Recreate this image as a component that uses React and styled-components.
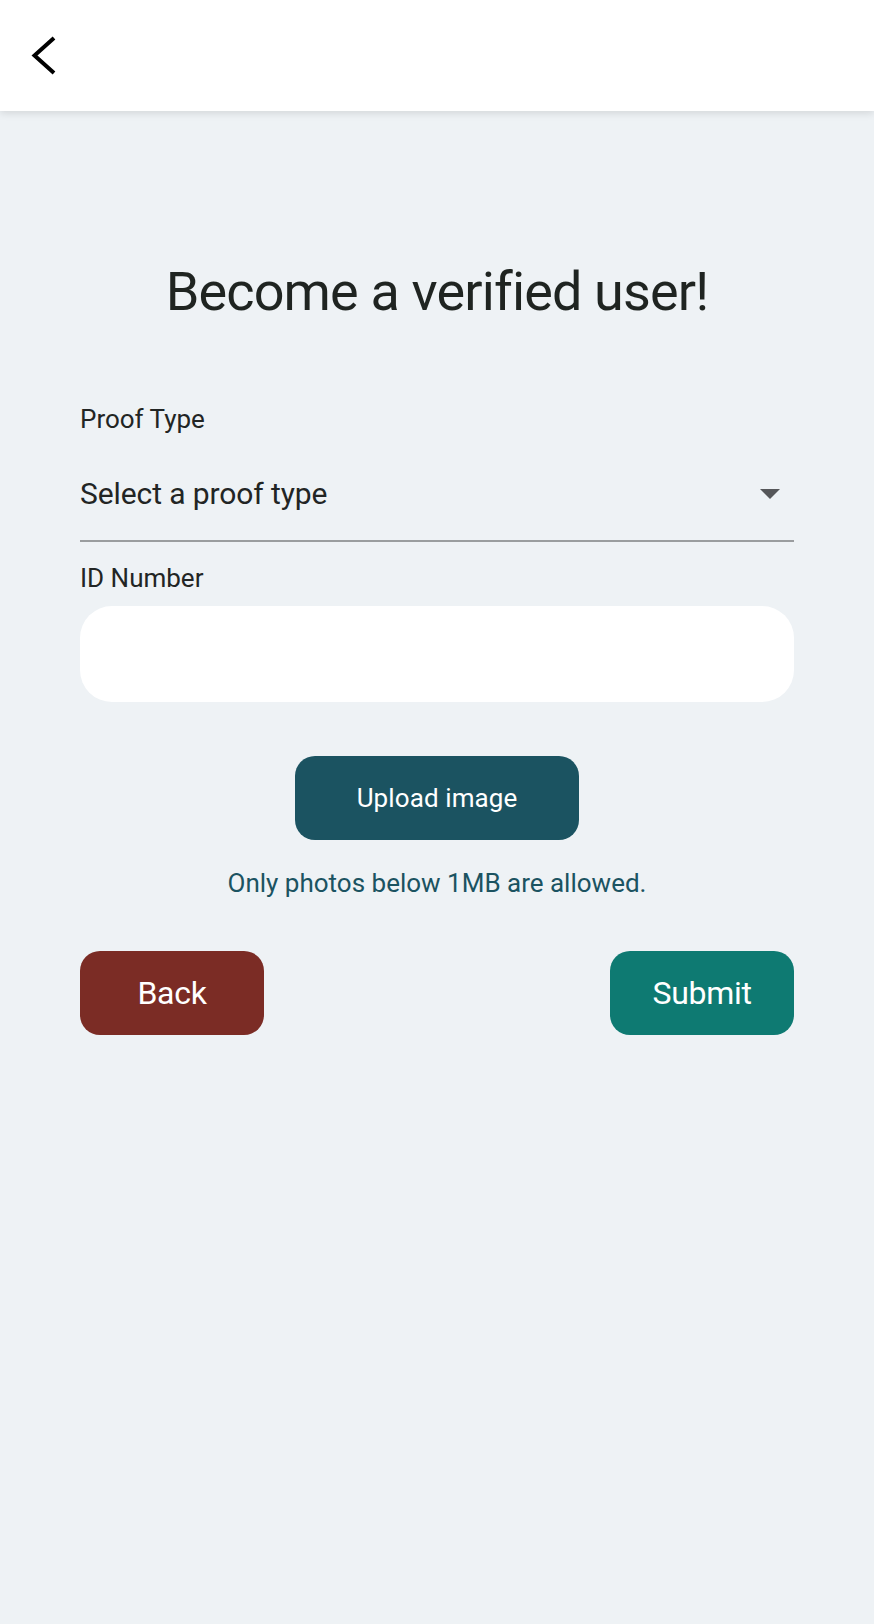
import React from 'react';
import styled, { createGlobalStyle } from 'styled-components';

const GlobalStyle = createGlobalStyle`
  body {
    margin: 0;
    background: #eef2f5;
    font-family: Roboto, 'Liberation Sans', sans-serif;
  }
  #root {
    min-height: 100vh;
  }
`;

const Page = styled.div`
  min-height: 100vh;
  background: #eef2f5;
  color: #222524;
`;

const Header = styled.header`
  height: 111px;
  background: #ffffff;
  box-shadow: 0 2px 8px rgba(0, 0, 0, 0.12);
  display: flex;
  align-items: center;
  padding-left: 31px;
  box-sizing: border-box;
`;

const BackIcon = styled.button`
  border: none;
  background: none;
  padding: 0;
  margin-top: 1px;
  display: flex;
  cursor: pointer;
`;

const Content = styled.main`
  padding: 154px 80px 0;
  display: flex;
  flex-direction: column;
`;

const Title = styled.h1`
  margin: 0 0 87px;
  font-size: 54px;
  line-height: 1;
  font-weight: 400;
  text-align: center;
  letter-spacing: -0.85px;
  color: #1f2421;
`;

const Label = styled.label`
  display: block;
  font-size: 26px;
  line-height: 1;
  color: #222524;
`;

const SelectField = styled.div`
  display: flex;
  align-items: center;
  justify-content: space-between;
  padding: 47px 0 31px;
  border-bottom: 2px solid #9a9d9f;
  margin-bottom: 23px;
  cursor: pointer;
`;

const SelectText = styled.span`
  font-size: 30px;
  line-height: 1;
  color: #222524;
  letter-spacing: -0.1px;
`;

const Caret = styled.span`
  width: 0;
  height: 0;
  margin-right: 14px;
  border-left: 10px solid transparent;
  border-right: 10px solid transparent;
  border-top: 10px solid #555759;
`;

const TextInput = styled.input`
  margin-top: 15px;
  height: 96px;
  border: none;
  border-radius: 32px;
  background: #ffffff;
  padding: 0 28px;
  font-family: inherit;
  font-size: 26px;
  outline: none;
  box-sizing: border-box;
`;

const UploadBlock = styled.div`
  display: flex;
  flex-direction: column;
  align-items: center;
  margin-top: 54px;
`;

const UploadButton = styled.button`
  width: 284px;
  height: 84px;
  border: none;
  border-radius: 20px;
  background: #1b5361;
  color: #ffffff;
  font-family: inherit;
  font-size: 26px;
  line-height: 1;
  letter-spacing: 0.1px;
  cursor: pointer;
`;

const Hint = styled.p`
  margin: 30px 0 0;
  font-size: 26px;
  line-height: 1;
  color: #1b5361;
`;

const Actions = styled.div`
  display: flex;
  justify-content: space-between;
  margin-top: 55px;
`;

const ActionButton = styled.button`
  width: 184px;
  height: 84px;
  border: none;
  border-radius: 20px;
  background: ${(p) => p.color};
  color: #ffffff;
  font-family: inherit;
  font-size: 32px;
  line-height: 1;
  letter-spacing: -0.3px;
  cursor: pointer;
`;

const App = () => {
  return (
    <Page>
      <GlobalStyle />
      <Header>
        <BackIcon aria-label="Back">
          <svg width="26" height="40" viewBox="0 0 26 40">
            <polyline
              points="23,2 3.5,19.5 23,37"
              fill="none"
              stroke="#000"
              strokeWidth="4"
            />
          </svg>
        </BackIcon>
      </Header>
      <Content>
        <Title>Become a verified user!</Title>
        <Label>Proof Type</Label>
        <SelectField>
          <SelectText>Select a proof type</SelectText>
          <Caret />
        </SelectField>
        <Label>ID Number</Label>
        <TextInput type="text" />
        <UploadBlock>
          <UploadButton>Upload image</UploadButton>
          <Hint>Only photos below 1MB are allowed.</Hint>
        </UploadBlock>
        <Actions>
          <ActionButton color="#7b2c25">Back</ActionButton>
          <ActionButton color="#0e7a72">Submit</ActionButton>
        </Actions>
      </Content>
    </Page>
  );
};

export default App;
